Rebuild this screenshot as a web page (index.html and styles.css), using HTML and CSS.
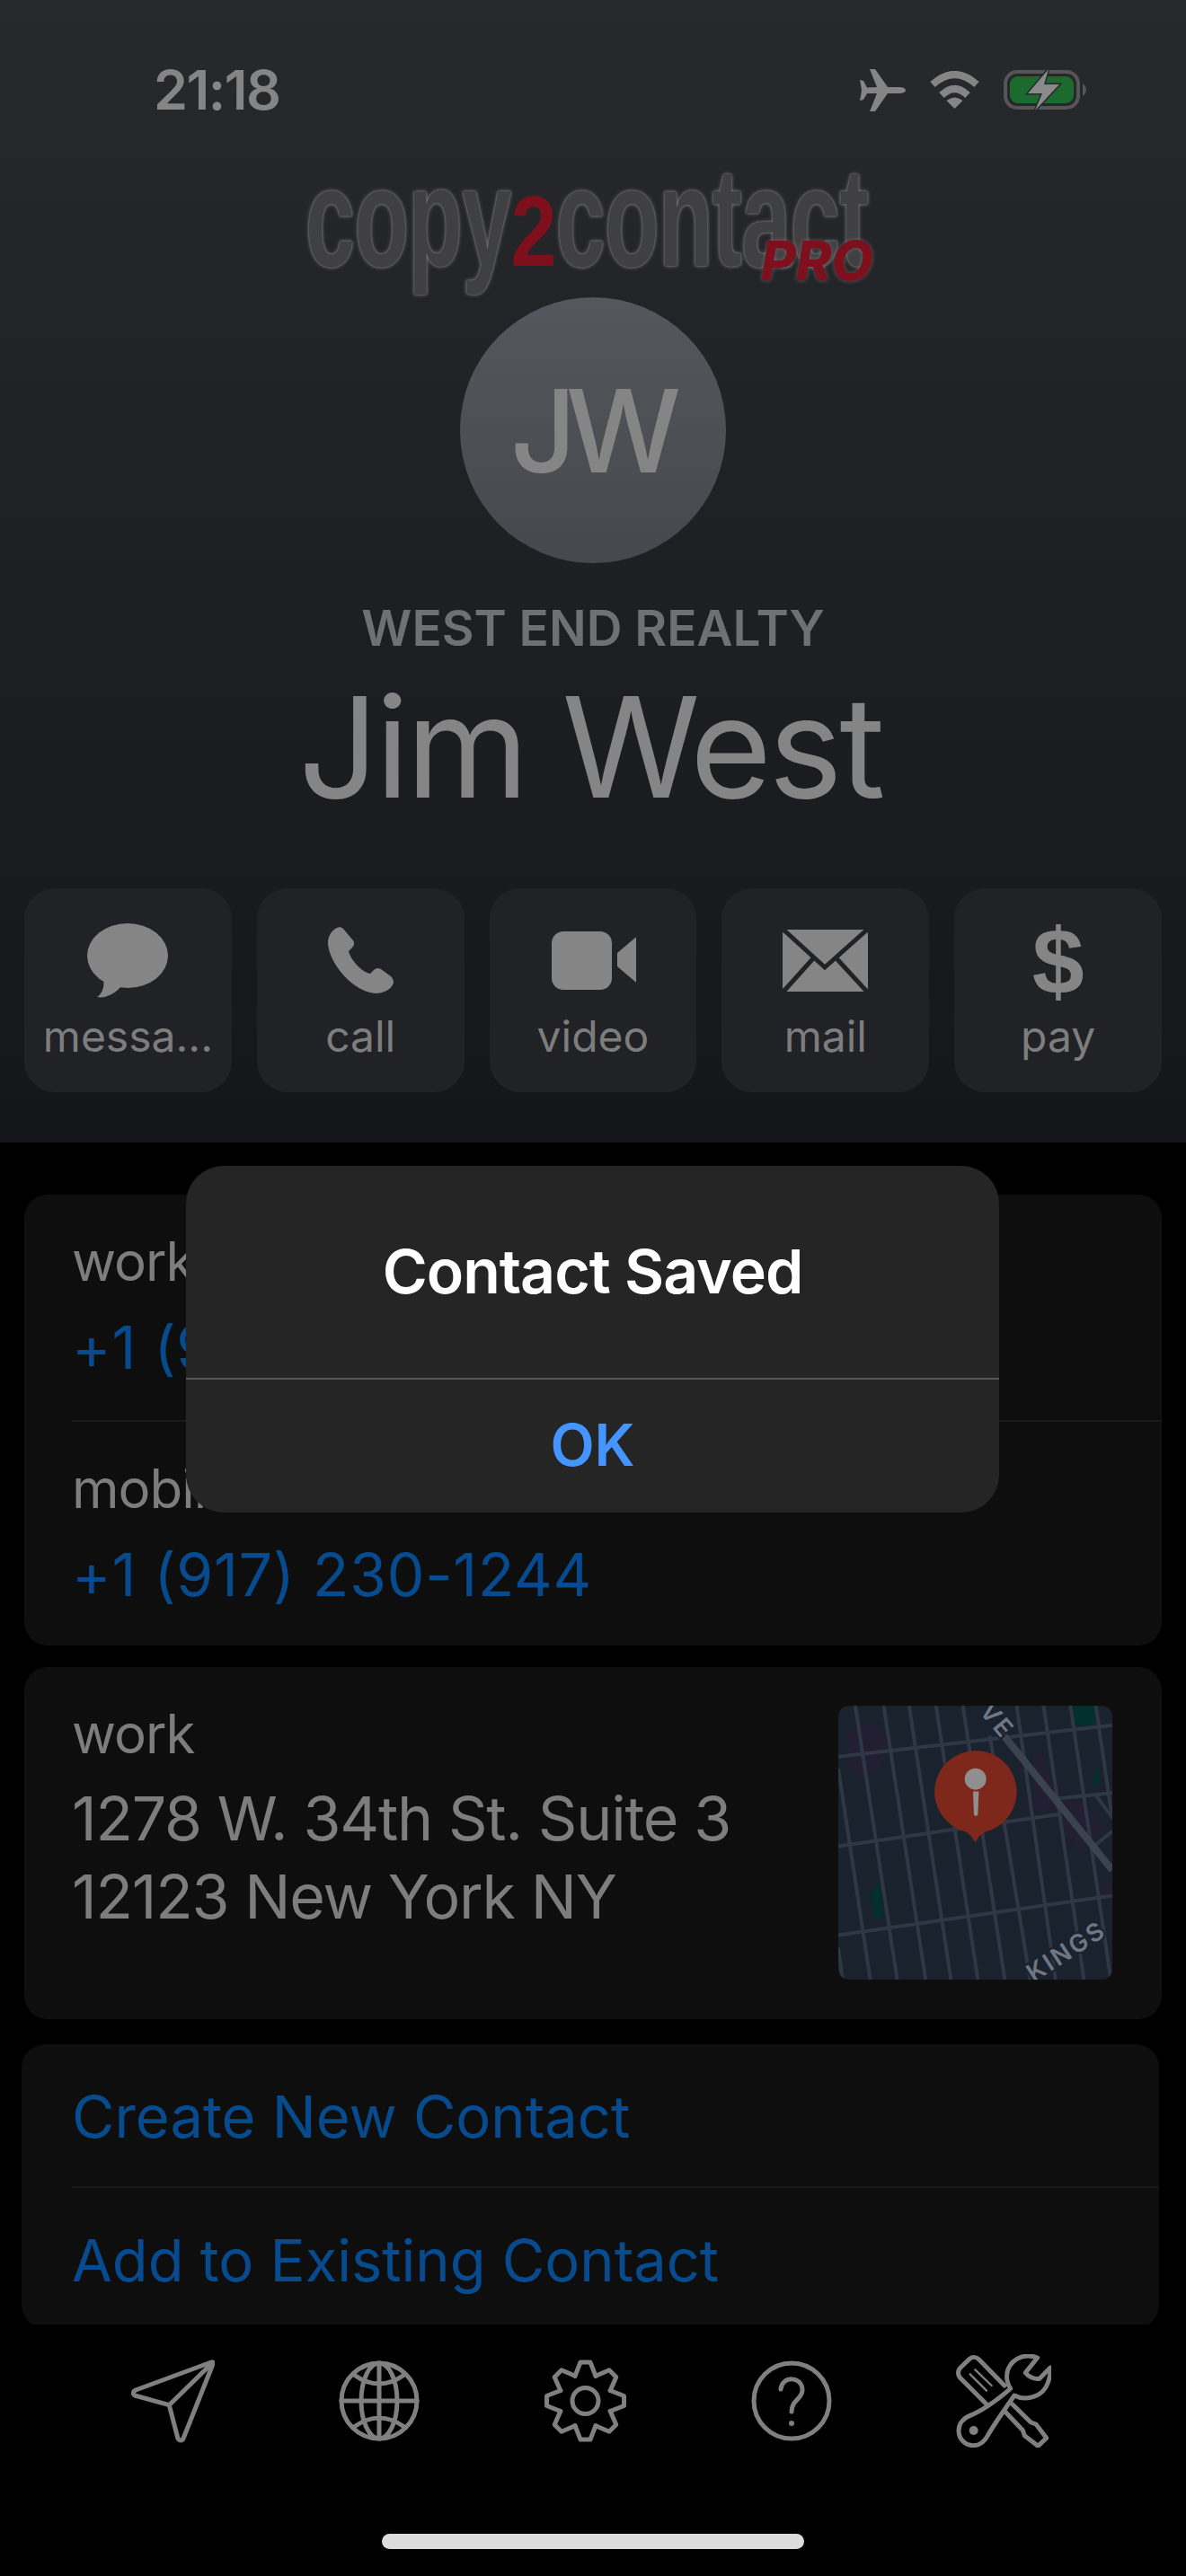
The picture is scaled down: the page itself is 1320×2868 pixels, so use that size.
FILE: index.html
```html
<!DOCTYPE html>
<html lang="en">
<head>
	<meta charset="UTF-8">
	<title>Contact</title>
	<link rel="stylesheet" href="styles.css">
</head>
<body>
	<div class="page">
		<div class="main">
			<header class="hero">
				<div class="status">
					<span class="time">21:18</span>
					<div class="status-icons">
						<svg class="plane" viewBox="0 0 51 47"><path d="M51 23.5C51 21 47 20 43 20L31 20L17 0L11 0L19 20L8 20.5L4 13L0 12L2 23.5L0 35L4 34L8 27L19 27L11 47L17 47L31 27L43 27C47 27 51 26 51 23.5Z"/></svg>
						<svg class="wifi" viewBox="0 0 57 42"><path class="wifi-arc" d="M4 15Q28.5 -7 53 15"/><path class="wifi-arc" d="M14 27Q28.5 13 43 27"/><path d="M28.5 42L19.5 33Q28.5 26 37.5 33Z"/></svg>
						<svg class="battery" viewBox="0 0 92 46"><rect class="batt-shell" x="2" y="3" width="81" height="40" rx="13"/><rect class="batt-fill" x="7" y="8" width="71" height="30" rx="9"/><path class="batt-nub" d="M88 16Q92 19 92 23Q92 27 88 30Z"/><path class="batt-bolt" d="M50 0L27 27L43 27L35 46L62 17L45 17Z"/></svg>
					</div>
				</div>
				<div class="logo">
					<div class="logo-word">copy<span class="logo-two">2</span>contact</div>
					<span class="logo-pro">PRO</span>
				</div>
				<div class="avatar">JW</div>
				<div class="company">WEST END REALTY</div>
				<h1 class="name">Jim West</h1>
				<div class="actions">
					<div class="action">
						<svg class="act-icon" width="90" height="96" viewBox="0 0 90 96"><ellipse cx="45" cy="42" rx="45" ry="36"/><path d="M18 68C20 78 15 86 11 88C20 90 32 84 38 76Z"/></svg>
						<span>messa...</span>
					</div>
					<div class="action">
						<svg class="act-icon" width="74" height="96" viewBox="0 -10 74 96"><path d="M11 1C5 4 1 10 1 18C2 40 28 72 54 74C62 74 72 70 74 62C74 59 73 57 71 55L60 47C57 45 54 46 52 48L48 52C38 50 26 36 24 27L28 23C30 21 31 18 29 15L18 2C16 0 13 0 11 1Z"/></svg>
						<span>call</span>
					</div>
					<div class="action">
						<svg class="act-icon" width="97" height="96" viewBox="-3 -15 97 96"><rect x="0" y="0" width="67" height="65" rx="13"/><path d="M73 24L93 7Q97 5 97 10V54Q97 59 93 56L73 39Z"/></svg>
						<span>video</span>
					</div>
					<div class="action">
						<svg class="act-icon" width="95" height="96" viewBox="0 -13 95 96"><rect width="95" height="69" rx="5"/><path class="mail-cut" d="M1 0L47 42L94 0M1 69L35 31M94 69L59 31"/></svg>
						<span>mail</span>
					</div>
					<div class="action">
						<span class="dollar">$</span>
						<span>pay</span>
					</div>
				</div>
			</header>

			<section class="card card-phones">
				<div class="row">
					<div class="label">work</div>
					<div class="link">+1 (917) 230-1244</div>
				</div>
				<div class="row row-line">
					<div class="label">mobile</div>
					<div class="link">+1 (917) 230-1244</div>
				</div>
			</section>

			<section class="card card-address">
				<div class="address">
					<div class="label">work</div>
					<div class="address-text">1278 W. 34th St. Suite 3<br>12123 New York NY</div>
				</div>
				<svg class="map" viewBox="158 120 917 916">
					<rect x="158" y="120" width="917" height="916" fill="#1a222d"/>
					<g fill="#221f33">
						<path d="M185 205L250 180L290 185L320 240L305 330L215 360L195 320Z"/>
						<path d="M810 285L840 270L860 340L900 440L975 440L1045 530L975 610L925 560L890 470L815 470Z"/>
						<path d="M1030 705L1075 695V750L1030 755Z"/>
					</g>
					<g fill="#02302c">
						<rect x="945" y="120" width="70" height="65"/>
						<path d="M265 745L295 710L310 830L280 830Z"/>
						<path d="M1012 360L1030 325V385H1015Z"/>
					</g>
					<g class="streets">
						<path d="M158 290L1075 185"/>
						<path d="M158 590L895 483"/>
						<path d="M895 430L1075 412"/>
						<path d="M158 888L1075 755"/>
						<path d="M158 330L265 1036"/>
						<path d="M158 930L172 1036"/>
						<path d="M215 120L355 1036"/>
						<path d="M310 120L450 1036"/>
						<path d="M395 120L535 1036"/>
						<path d="M485 120L625 1036"/>
						<path d="M575 120L715 1036"/>
						<path d="M665 220L800 1036"/>
						<path d="M755 120L885 1036"/>
						<path d="M845 120L980 1036"/>
						<path d="M935 120L1070 1036"/>
						<path d="M1020 120L1075 500"/>
						<path d="M1020 585L1075 540"/>
						<path d="M1020 420L1075 495"/>
					</g>
					<path class="avenue" d="M700 205L1075 670"/>
					<text class="map-label" transform="translate(628 140) rotate(50)">VE</text>
					<text class="map-label" transform="translate(812 1046) rotate(-33)">KINGS</text>
					<path class="pin" d="M617 270A138 138 0 0 1 650 542Q630 552 616 577Q602 552 585 542A138 138 0 0 1 617 270Z"/>
					<circle class="pin-head" cx="617" cy="365" r="36"/>
					<path class="pin-head" d="M609 407H628L625 485Q618 494 612 485Z"/>
				</svg>
			</section>

			<section class="card card-links">
				<div class="link-row">Create New Contact</div>
				<div class="link-row link-line">Add to Existing Contact</div>
			</section>
		</div>

		<nav class="tabbar">
			<div class="tabs">
				<svg class="tab" width="93" height="93" viewBox="0 0 93 93"><path d="M89 3L5 34Q0 37 4 40L42.3 50.7L52 88Q55.7 92 58 88L91 5Q91.5 2 89 3ZM42.3 50.7L90 4"/></svg>
				<svg class="tab" width="90" height="90" viewBox="-45 -45 90 90"><circle r="42"/><ellipse rx="20" ry="42"/><path d="M0 -42V42M-42 0H42M-28 -29Q0 -9 28 -29M-28 29Q0 9 28 29"/></svg>
				<svg class="tab" width="93" height="96" viewBox="-46.5 -48 93 96">
					<defs><path id="tooth" d="M-11.5 -27.7L-5.5 -43H5.5L11.5 -27.7"/></defs>
					<use href="#tooth"/><use href="#tooth" transform="rotate(45)"/><use href="#tooth" transform="rotate(90)"/><use href="#tooth" transform="rotate(135)"/><use href="#tooth" transform="rotate(180)"/><use href="#tooth" transform="rotate(225)"/><use href="#tooth" transform="rotate(270)"/><use href="#tooth" transform="rotate(315)"/>
					<circle r="14.5"/>
				</svg>
				<svg class="tab" width="90" height="90" viewBox="-45 -45 90 90"><circle r="42"/><path d="M-12 -13C-11 -28 12 -28 12 -12C12 -2 0 -1 0 12"/><circle class="tab-dot" cy="25" r="3"/></svg>
				<svg class="tab tab-tools" width="106" height="104" viewBox="33 30 318 312">
					<path d="M305 42C270 28 225 38 207 80C198 105 205 130 215 145C180 175 130 215 80 235C55 245 42 265 42 285C42 315 65 335 90 335C115 335 130 320 140 300C160 265 195 215 228 168C270 190 325 170 340 125C346 108 350 90 348 75L312 112C295 115 275 105 265 92Z"/>
					<path d="M195 135L110 48C100 38 88 38 78 46L48 75C38 85 38 100 48 110L135 197"/>
					<path class="tool-thin" d="M80 97L135 152M97 82L152 135"/>
					<path d="M222 198L283 258L300 264L335 310L307 337L262 302L256 284L197 222"/>
					<circle class="tab-dot" cx="92" cy="285" r="15"/>
				</svg>
			</div>
			<div class="home-bar"></div>
		</nav>

		<div class="alert">
			<div class="alert-title">Contact Saved</div>
			<div class="alert-btn">OK</div>
		</div>
	</div>
</body>
</html>
```

FILE: styles.css
```css
*{
	margin: 0;
	padding: 0;
	box-sizing: border-box;
}
body{
	background: #000;
	font-family: "Inter", "Liberation Sans", sans-serif;
}
.page{
	position: relative;
	width: 1320px;
	height: 2868px;
	display: flex;
	flex-direction: column;
	overflow: hidden;
	background: #000;
}
.main{
	flex: none;
	height: 2588px;
	overflow: hidden;
}

/* top part */
.hero{
	height: 1272px;
	background: linear-gradient(#27292d, #14161a);
	display: flex;
	flex-direction: column;
	align-items: center;
}
.status{
	width: 100%;
	height: 140px;
	padding: 60px 111px 0 171px;
	display: flex;
	justify-content: space-between;
	align-items: center;
	flex: none;
}
.time{
	font-size: 61px;
	font-weight: 600;
	letter-spacing: -1.5px;
	color: #858585;
}
.status-icons{
	display: flex;
	align-items: center;
	gap: 26px;
}
.status-icons svg{
	fill: #858585;
}
.plane{
	width: 51px;
	height: 47px;
}
.wifi{
	width: 57px;
	height: 42px;
}
.wifi path{
	fill: #858585;
}
.wifi .wifi-arc{
	fill: none;
	stroke: #858585;
	stroke-width: 8;
}
.battery{
	width: 92px;
	height: 46px;
}
.status-icons .batt-shell{
	fill: none;
	stroke: #555;
	stroke-width: 4;
}
.status-icons .batt-fill{
	fill: #1c6a2e;
}
.status-icons .batt-nub{
	fill: #555;
}
.status-icons .batt-bolt{
	fill: #8a8a8a;
	stroke: #26282c;
	stroke-width: 3;
	paint-order: stroke;
}

/* logo */
.logo{
	position: relative;
	width: 640px;
	height: 171px;
	margin-top: 22px;
	margin-bottom: -2px;
	flex: none;
}
.logo-word{
	width: 1040px;
	font-family: "Liberation Sans", sans-serif;
	font-size: 156px;
	font-weight: 700;
	line-height: 160px;
	white-space: nowrap;
	color: #404042;
	text-shadow: 0 0 3px rgba(150,150,150,.8), 0 0 7px rgba(150,150,150,.6);
	transform: scaleX(.635);
	transform-origin: left top;
	letter-spacing: -1px;
}
.logo-two{
	display: inline-block;
	margin: 0 9px;
	font-size: 111px;
	line-height: 100px;
	color: #7d101c;
	text-shadow: none;
	transform: scaleX(1.3);
}
.logo-pro{
	position: absolute;
	right: 8px;
	top: 98px;
	font-size: 60px;
	line-height: 60px;
	font-weight: 800;
	font-style: italic;
	color: #7d101c;
	text-shadow: 0 0 5px rgba(150,150,150,.5);
}

.avatar{
	width: 296px;
	height: 296px;
	flex: none;
	border-radius: 50%;
	background: linear-gradient(#54575d, #47484d);
	display: flex;
	align-items: center;
	justify-content: center;
	padding-right: 6px;
	font-size: 128px;
	font-weight: 500;
	color: #858585;
	letter-spacing: -12px;
}
.company{
	margin-top: 41px;
	font-size: 55px;
	line-height: 62px;
	font-weight: 600;
	color: #6f7072;
}
.name{
	margin-top: 17px;
	margin-right: 6px;
	font-size: 156px;
	line-height: 170px;
	font-weight: 400;
	color: #858585;
	letter-spacing: -3.5px;
}
.actions{
	width: 100%;
	margin-top: 72px;
	padding: 0 27px;
	display: flex;
	gap: 28px;
}
.action{
	flex: 1;
	height: 227px;
	padding-top: 33px;
	border-radius: 34px;
	background: #212226;
	display: flex;
	flex-direction: column;
	align-items: center;
	gap: 6px;
	font-size: 48px;
	line-height: 60px;
	color: #7d7d7d;
}
.act-icon{
	fill: #858585;
	flex: none;
}
.mail-cut{
	fill: none;
	stroke: #212226;
	stroke-width: 5;
}
.dollar{
	height: 96px;
	font-family: "Liberation Sans", sans-serif;
	font-size: 104px;
	line-height: 96px;
	font-weight: 700;
	color: #858585;
}

/* cards */
.card{
	margin: 28px 27px 0;
	border-radius: 26px;
	background: #0e0e0e;
}
.card-phones{
	margin-top: 58px;
	height: 502px;
}
.row{
	height: 251px;
	margin-left: 53px;
	padding-top: 38px;
}
.row-line{
	border-top: 2px solid #1a1a1a;
}
.label{
	font-size: 60px;
	line-height: 72px;
	color: #7d7d7d;
	letter-spacing: -1px;
}
.link{
	margin-top: 22px;
	font-size: 66px;
	line-height: 76px;
	color: #074b8e;
	letter-spacing: .8px;
}
.card-address{
	height: 392px;
	margin-top: 24px;
	padding: 38px 55px 0 53px;
	display: flex;
	justify-content: space-between;
	align-items: flex-start;
}
.address-text{
	margin-top: 15px;
	font-size: 68px;
	line-height: 87px;
	color: #7d7d7d;
	letter-spacing: -1.2px;
}
.map{
	width: 305px;
	height: 305px;
	margin-top: 5px;
	border-radius: 12px;
	flex: none;
}
.streets path{
	fill: none;
	stroke: #303744;
	stroke-width: 12;
}
.avenue{
	fill: none;
	stroke: #3b4250;
	stroke-width: 24;
}
.map-label{
	font-size: 82px;
	font-weight: 600;
	letter-spacing: 8px;
	fill: #6f7784;
	stroke: #1a222d;
	stroke-width: 14;
	paint-order: stroke;
}
.pin{
	fill: #7e281c;
}
.pin-head{
	fill: #8f8f8f;
}
.card-links{
	margin: 28px 30px 0 24px;
}
.link-row{
	height: 158px;
	margin-left: 56px;
	font-size: 65px;
	line-height: 162px;
	color: #074b8e;
}
.link-line{
	border-top: 2px solid #1a1a1a;
}

/* bottom bar */
.tabbar{
	flex: 1;
	background: #000;
	display: flex;
	flex-direction: column;
	align-items: center;
}
.tabs{
	width: 100%;
	height: 170px;
	padding-left: 146px;
	display: flex;
	gap: 138px;
	align-items: center;
	flex: none;
}
.tab{
	flex: none;
	fill: none;
	stroke: #808080;
	stroke-width: 5;
	stroke-linejoin: round;
	stroke-linecap: round;
}
.tab-tools{
	stroke-width: 15;
}
.tab-dot{
	fill: #808080;
	stroke: none;
}
.tool-thin{
	stroke-width: 7;
}
.home-bar{
	width: 470px;
	height: 17px;
	margin-top: 63px;
	border-radius: 9px;
	background: #dcdcdc;
}

/* alert box */
.alert{
	position: absolute;
	left: 207px;
	top: 1298px;
	width: 905px;
	height: 386px;
	border-radius: 42px;
	background: #252525;
	color: #fff;
	text-align: center;
}
.alert-title{
	height: 238px;
	padding-top: 77px;
	border-bottom: 2px solid #555;
	font-size: 68px;
	line-height: 80px;
	font-weight: 600;
	letter-spacing: -1px;
}
.alert-btn{
	padding-top: 33px;
	font-size: 64px;
	line-height: 80px;
	font-weight: 600;
	color: #4495ff;
}
```
